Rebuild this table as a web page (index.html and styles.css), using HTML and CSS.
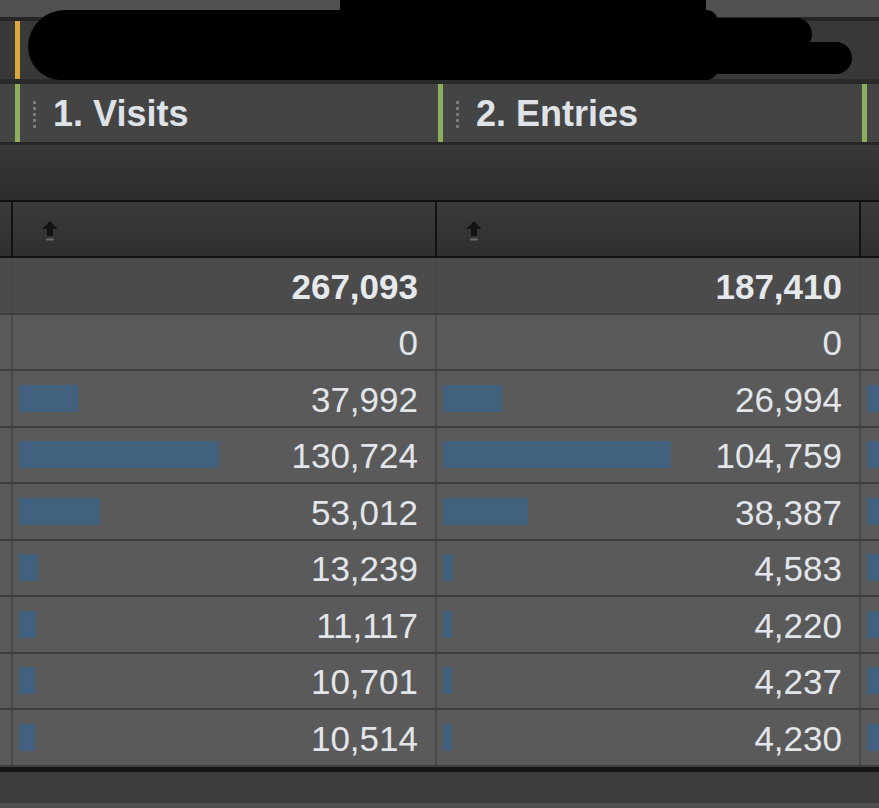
FILE: index.html
```html
<!DOCTYPE html>
<html>
<head>
<meta charset="utf-8">
<link rel="stylesheet" href="styles.css">
</head>
<body>
<div class="page">
  <div class="top-strip"></div>
  <div class="segment-row">
    <div class="segment-cell"><span class="seg-label">-</span></div>
  </div>
  <div class="header-row">
    <div class="h-spacer"></div>
    <div class="h-cell"><span class="grip"><i></i><i></i><i></i><i></i><i></i></span><span class="h-title">1. Visits</span></div>
    <div class="h-cell"><span class="grip"><i></i><i></i><i></i><i></i><i></i></span><span class="h-title">2. Entries</span></div>
    <div class="h-cell h-last"></div>
  </div>
  <div class="band"></div>
  <div class="row sort-row">
    <div class="c0"></div>
    <div class="c"><svg class="arrow" width="18" height="24" viewBox="0 0 18 24"><path d="M9 2 L16.5 10 L12 10 L12 17 L6 17 L6 10 L1.5 10 Z" fill="#141414"/><rect x="5" y="19.5" width="8" height="2" rx="1" fill="#6e6e6e"/></svg></div>
    <div class="c"><svg class="arrow" width="18" height="24" viewBox="0 0 18 24"><path d="M9 2 L16.5 10 L12 10 L12 17 L6 17 L6 10 L1.5 10 Z" fill="#141414"/><rect x="5" y="19.5" width="8" height="2" rx="1" fill="#6e6e6e"/></svg></div>
    <div class="c"></div>
  </div>
  <div class="row total-row">
    <div class="c0"></div>
    <div class="c num"><span class="val">267,093</span></div>
    <div class="c num"><span class="val">187,410</span></div>
    <div class="c"></div>
  </div>
  <div class="row data-row">
    <div class="c0"></div>
    <div class="c num"><span class="val">0</span></div>
    <div class="c num"><span class="val">0</span></div>
    <div class="c"></div>
  </div>
  <div class="row data-row">
    <div class="c0"></div>
    <div class="c num"><span class="bar" style="width:59px"></span><span class="val">37,992</span></div>
    <div class="c num"><span class="bar" style="width:59px"></span><span class="val">26,994</span></div>
    <div class="c"><span class="bar"></span></div>
  </div>
  <div class="row data-row">
    <div class="c0"></div>
    <div class="c num"><span class="bar" style="width:200px"></span><span class="val">130,724</span></div>
    <div class="c num"><span class="bar" style="width:228px"></span><span class="val">104,759</span></div>
    <div class="c"><span class="bar"></span></div>
  </div>
  <div class="row data-row">
    <div class="c0"></div>
    <div class="c num"><span class="bar" style="width:81px"></span><span class="val">53,012</span></div>
    <div class="c num"><span class="bar" style="width:85px"></span><span class="val">38,387</span></div>
    <div class="c"><span class="bar"></span></div>
  </div>
  <div class="row data-row">
    <div class="c0"></div>
    <div class="c num"><span class="bar" style="width:19px"></span><span class="val">13,239</span></div>
    <div class="c num"><span class="bar" style="width:10px"></span><span class="val">4,583</span></div>
    <div class="c"><span class="bar"></span></div>
  </div>
  <div class="row data-row">
    <div class="c0"></div>
    <div class="c num"><span class="bar" style="width:17px"></span><span class="val">11,117</span></div>
    <div class="c num"><span class="bar" style="width:9px"></span><span class="val">4,220</span></div>
    <div class="c"><span class="bar"></span></div>
  </div>
  <div class="row data-row">
    <div class="c0"></div>
    <div class="c num"><span class="bar" style="width:16px"></span><span class="val">10,701</span></div>
    <div class="c num"><span class="bar" style="width:9px"></span><span class="val">4,237</span></div>
    <div class="c"><span class="bar"></span></div>
  </div>
  <div class="row data-row">
    <div class="c0"></div>
    <div class="c num"><span class="bar" style="width:16px"></span><span class="val">10,514</span></div>
    <div class="c num"><span class="bar" style="width:9px"></span><span class="val">4,230</span></div>
    <div class="c"><span class="bar"></span></div>
  </div>
  <div class="footer"></div>
  <div class="footer-edge"></div>

  <div class="redact r1"></div>
  <div class="redact r2"></div>
  <div class="redact r3"></div>
  <div class="redact r4"></div>
</div>
</body>
</html>
```

FILE: styles.css
```css
* { box-sizing: border-box; }
html, body { margin: 0; padding: 0; }
body {
  background: #3c3c3c;
  font-family: "Liberation Sans", Arial, sans-serif;
  width: 879px;
  height: 808px;
  overflow: hidden;
}
.page {
  position: relative;
  width: 879px;
  height: 808px;
  display: flex;
  flex-direction: column;
}
.top-strip {
  height: 21px;
  background: #505050;
  border-bottom: 4px solid #262626;
  flex: none;
}
.segment-row {
  height: 63px;
  background: #393939;
  border-bottom: 5px solid #2a2a2a;
  padding-left: 15px;
  flex: none;
}
.segment-cell {
  height: 100%;
  border-left: 5px solid #d9a83a;
  padding-left: 14px;
  display: flex;
  align-items: flex-end;
  color: #9a9a9a;
  font-size: 16px;
}
.seg-label { padding-bottom: 6px; }
.header-row {
  height: 61px;
  display: grid;
  grid-template-columns: 15px 423px 424px 1fr;
  background: #444444;
  border-bottom: 3px solid #262626;
  flex: none;
}
.h-cell {
  border-left: 5px solid #8db05e;
  display: flex;
  align-items: center;
  padding-left: 13px;
  padding-top: 2px;
}
.grip {
  display: flex;
  flex-direction: column;
  gap: 3px;
  width: 3px;
  margin-right: 17px;
}
.grip i {
  display: block;
  width: 3px;
  height: 3px;
  background: #7a7a7a;
}
.h-title {
  font-size: 36px;
  font-weight: bold;
  color: #dfe3e8;
}
.band {
  height: 55px;
  background: linear-gradient(#383838, #2c2c2c);
  flex: none;
}
.row {
  display: grid;
  grid-template-columns: 11px 424px 424px 1fr;
  flex: none;
}
.row .c { border-left: 2px solid #474747; }
.sort-row {
  height: 58px;
  border-top: 2px solid #121212;
  border-bottom: 2px solid #121212;
  background: linear-gradient(#3b3b3b, #2f2f2f);
}
.sort-row .c {
  border-left-color: #121212;
  display: flex;
  align-items: center;
  padding-left: 28px;
}
.arrow { display: block; margin-top: 4px; }
.total-row {
  height: 56.5px;
  background: #4b4b4b;
  border-bottom: 2px solid #3f3f3f;
}
.data-row {
  height: 56.5px;
  background: #5a5a5a;
  border-bottom: 2px solid #3e3e3e;
}
.num {
  display: flex;
  align-items: center;
  padding-left: 6px;
  padding-right: 17px;
}
.val {
  margin-left: auto;
  font-size: 35px;
  color: #e2e5e9;
  line-height: 1;
  padding-top: 2px;
}
.total-row .val { font-weight: bold; color: #e6e9ec; }
.bar {
  display: block;
  height: 27px;
  background: #41617f;
  flex: none;
}
.data-row .c:last-child {
  display: flex;
  align-items: center;
  padding-left: 6px;
}
.data-row .c:last-child .bar { width: 20px; }
.footer {
  height: 36px;
  background: #3c3c3c;
  border-top: 5px solid #161616;
  flex: none;
}
.footer-edge {
  flex: 1;
  background: #505050;
}
.redact {
  position: absolute;
  background: #000;
}
.r1 { left: 28px; top: 10px; width: 690px; height: 70px; border-radius: 38px 12px 12px 34px; }
.r2 { left: 340px; top: 0; width: 366px; height: 26px; border-radius: 0 0 14px 0; }
.r3 { left: 600px; top: 18px; width: 212px; height: 32px; border-radius: 16px; }
.r4 { left: 600px; top: 42px; width: 252px; height: 32px; border-radius: 16px; }
```
